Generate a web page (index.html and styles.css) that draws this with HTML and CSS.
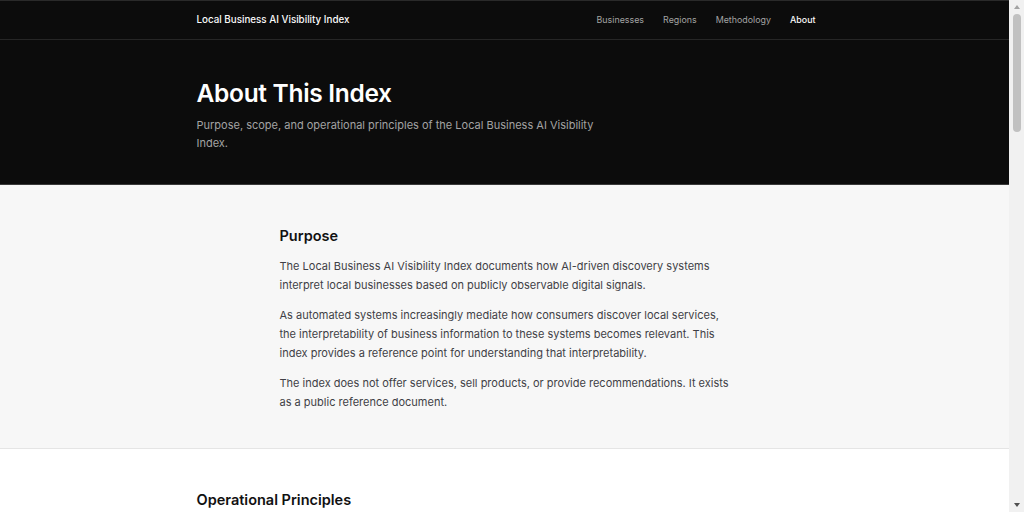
FILE: index.html
```html
<!DOCTYPE html>
<html lang="en">
<head>
<meta charset="utf-8">
<title>About This Index</title>
<link rel="stylesheet" href="styles.css">
</head>
<body>
<header class="nav">
  <div class="container nav-inner">
    <a class="brand" href="#">Local Business AI Visibility Index</a>
    <nav class="links">
      <a href="#">Businesses</a>
      <a href="#">Regions</a>
      <a href="#">Methodology</a>
      <a href="#" class="active">About</a>
    </nav>
  </div>
</header>
<section class="hero">
  <div class="container">
    <h1>About This Index</h1>
    <p class="lead">Purpose, scope, and operational principles of the Local Business AI Visibility Index.</p>
  </div>
</section>
<section class="band">
  <div class="narrow">
    <h2>Purpose</h2>
    <p>The Local Business AI Visibility Index documents how AI-driven discovery systems interpret local businesses based on publicly observable digital signals.</p>
    <p>As automated systems increasingly mediate how consumers discover local services, the interpretability of business information to these systems becomes relevant. This index provides a reference point for understanding that interpretability.</p>
    <p>The index does not offer services, sell products, or provide recommendations. It exists as a public reference document.</p>
  </div>
</section>
<section class="plain">
  <div class="container">
    <h2>Operational Principles</h2>
    <p>The index is maintained according to a small set of principles that govern how information is collected, interpreted and presented.</p>
    <p>Observations are based only on publicly available information. No private data is collected, purchased, or inferred.</p>
    <p>Entries are not ranked for commercial benefit and no business can pay to change its placement.</p>
  </div>
</section>
<div class="scrollbar" aria-hidden="true">
  <span class="arrow up"></span>
  <span class="thumb"></span>
  <span class="arrow down"></span>
</div>
</body>
</html>
```
FILE: styles.css
```css
* { box-sizing: border-box; }
html {
  margin: 0;
  padding: 0;
  background: #f1f1f1;
}
body {
  margin: 0 15px 0 0;
  padding: 0;
  font-family: Inter, "Noto Sans", sans-serif;
  background: #ffffff;
  color: #18181b;
  -webkit-font-smoothing: antialiased;
}
a { text-decoration: none; color: inherit; }
.container {
  max-width: 640px;
  margin: 0 auto;
  padding: 0 12px;
}
.nav {
  background: #0c0c0c;
  border-top: 1px solid #2a2a2a;
  border-bottom: 1px solid #262626;
}
.nav-inner {
  height: 38px;
  display: flex;
  align-items: center;
  justify-content: space-between;
}
.brand {
  color: #fafafa;
  font-size: 9.8px;
  font-weight: 500;
  line-height: 12px;
  margin-top: -1px;
}
.links {
  display: flex;
  gap: 19px;
  margin-top: -1px;
  margin-right: -3px;
}
.links a {
  font-size: 8.9px;
  color: #a3a3a3;
  line-height: 12px;
}
.links a.active { color: #fafafa; font-weight: 500; }
.hero {
  background: #0c0c0c;
  padding: 38px 0 32px;
  border-bottom: 1px solid #3a3a3a;
}
.hero h1 {
  margin: 0;
  color: #ffffff;
  font-size: 24.5px;
  font-weight: 600;
  letter-spacing: -0.3px;
  line-height: 30px;
}
.lead {
  margin: 9px 0 0;
  color: #a3a3a3;
  font-size: 11px;
  line-height: 17.5px;
  max-width: 420px;
}
.band {
  background: #f7f7f7;
  border-bottom: 1px solid #e5e5e5;
  padding: 40px 0 25px;
}
.narrow {
  max-width: 452px;
  padding-left: 1px;
  margin: 0 auto;
}
h2 {
  margin: 0 0 10px;
  font-size: 14.5px;
  font-weight: 600;
  color: #111111;
  line-height: 22px;
}
.band p, .plain p {
  margin: 0 0 11px;
  font-size: 11px;
  line-height: 19px;
  color: #3f3f46;
}
.plain {
  padding: 40px 0 40px;
}
.scrollbar {
  position: fixed;
  top: 0;
  right: 0;
  width: 15px;
  height: 100vh;
  background: #f1f1f1;
  display: flex;
  flex-direction: column;
  align-items: center;
}
.arrow {
  width: 0;
  height: 0;
  border-left: 3.5px solid transparent;
  border-right: 3.5px solid transparent;
  margin: 5px 0;
}
.arrow.up { border-bottom: 4px solid #a3a3a3; }
.arrow.down { border-top: 4px solid #505050; margin-top: auto; }
.thumb {
  width: 8px;
  height: 118px;
  background: #c1c1c1;
  border-radius: 4px;
}
```
